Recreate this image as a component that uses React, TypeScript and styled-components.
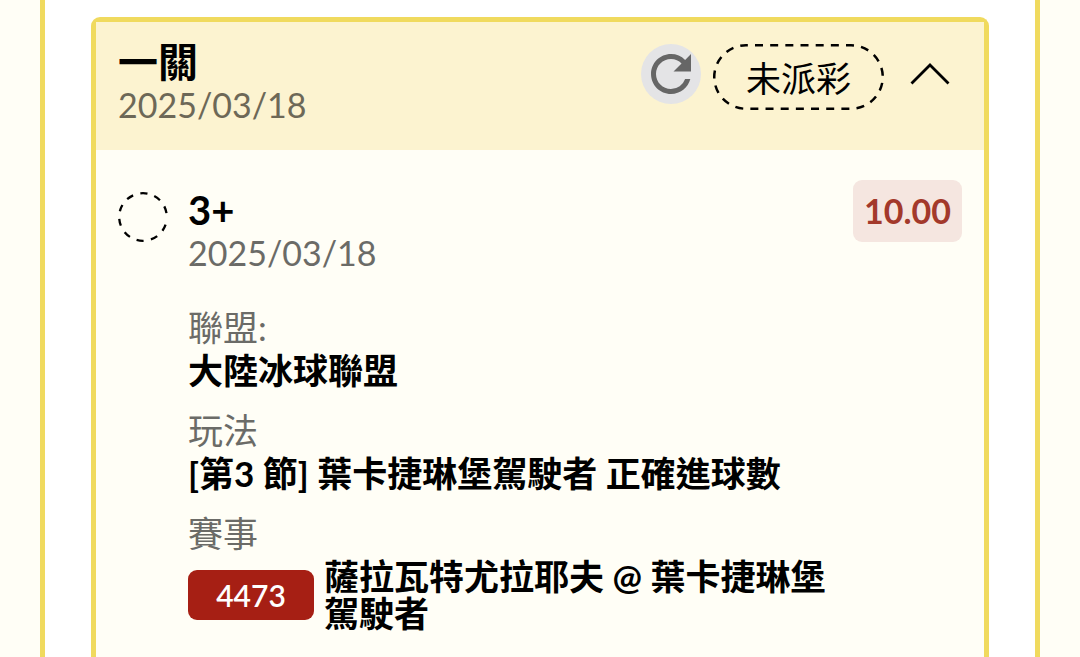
import React, { useState } from "react";
import styled, { createGlobalStyle } from "styled-components";

const GlobalStyle = createGlobalStyle`
  *, *::before, *::after { box-sizing: border-box; }
  body {
    margin: 0;
    background: #fffef6;
    color: #000;
    font-family: Lato, "Noto Sans CJK TC", sans-serif;
    font-size: 35px;
    line-height: 43px;
  }
`;

const Panel = styled.main`
  display: flex;
  flex-direction: column;
  min-height: 100vh;
  margin: 0 40px;
  padding: 17px 46px 0;
  background: #fff;
  border: solid #f0da5e;
  border-width: 0 5px;
`;

const Card = styled.section`
  flex: 1;
  background: #fffef6;
  border: 5px solid #f0da5e;
  border-bottom: 0;
  border-radius: 9px 9px 0 0;
`;

const CardHeader = styled.header`
  display: flex;
  justify-content: space-between;
  align-items: flex-start;
  padding: 19px 22px 25px;
  background: #fcf3d0;
`;

const Title = styled.h1`
  margin: 0;
  font-size: 40px;
  line-height: 43px;
  font-weight: 700;
`;

const DateText = styled.time<{ $tone: string }>`
  display: block;
  color: ${(p) => p.$tone};
  font-size: 34px;
  line-height: 41px;
`;

const Actions = styled.div`
  display: flex;
  align-items: flex-start;
  padding-top: 3px;
`;

const IconButton = styled.button<{ $width: number; $fill?: string }>`
  display: flex;
  align-items: center;
  justify-content: center;
  width: ${(p) => p.$width}px;
  height: 60px;
  padding: 0;
  border: 0;
  border-radius: 30px;
  background: ${(p) => p.$fill ?? "transparent"};
  cursor: pointer;
`;

const Status = styled.span`
  position: relative;
  display: flex;
  align-items: center;
  justify-content: center;
  width: 171px;
  height: 66px;
  margin: 0 14px 0 12px;
  padding-top: 2px;
`;

const StatusOutline = styled.svg`
  position: absolute;
  inset: 0;
`;

const CardBody = styled.div`
  display: grid;
  grid-template-columns: 50px 1fr auto;
  column-gap: 20px;
  align-items: start;
  padding: 30px 22px 24px;
`;

const Marker = styled.svg`
  margin-top: 12px;
`;

const Pick = styled.h2`
  margin: 0;
  padding-top: 9px;
  font-size: 40px;
  line-height: 43px;
  font-weight: 700;
`;

const Details = styled.dl`
  display: flex;
  flex-direction: column;
  gap: 17px;
  margin: 33px 0 0;
`;

const Label = styled.dt`
  color: #6b6b67;
`;

const Value = styled.dd`
  margin: 0;
  font-weight: 700;
`;

const Match = styled(Value)`
  display: flex;
  align-items: center;
  gap: 10px;
  padding-top: 3px;
  line-height: 37px;
`;

const MatchCode = styled.span`
  flex: none;
  width: 126px;
  border-radius: 9px;
  background: #a61f14;
  color: #fff;
  font-size: 30px;
  line-height: 50px;
  font-weight: 600;
  text-align: center;
`;

const Odds = styled.strong`
  padding: 0 11px;
  border-radius: 9px;
  background: #f5e6e0;
  color: #a3392b;
  font-size: 34px;
  line-height: 62px;
  font-weight: 700;
`;

const markerDashes = Array(9).fill("17 18").join(" ") + " 17 28";

export default function App() {
  const [open, setOpen] = useState(true);
  return (
    <>
      <GlobalStyle />
      <Panel>
        <Card>
          <CardHeader>
            <div>
              <Title>一關</Title>
              <DateText $tone="#6d6857" dateTime="2025-03-18">2025/03/18</DateText>
            </div>
            <Actions>
              <IconButton type="button" $width={60} $fill="#e4e4e6" aria-label="重新整理">
                <svg width="60" height="60" viewBox="0 0 24 24" fill="#666">
                  <path d="M17.65 6.35A7.96 7.96 0 0 0 12 4c-4.42 0-7.99 3.58-7.99 8s3.57 8 7.99 8c3.73 0 6.84-2.55 7.73-6h-2.08A5.99 5.99 0 0 1 12 18c-3.31 0-6-2.69-6-6s2.69-6 6-6c1.66 0 3.14.69 4.22 1.78L13 11h7V4l-2.35 2.35z" />
                </svg>
              </IconButton>
              <Status>
                <StatusOutline width="171" height="66" fill="none" stroke="#000" strokeWidth="2.5">
                  <rect x="1.25" y="1.25" width="168.5" height="63.5" rx="31.75" strokeDasharray="8 7.17" strokeDashoffset="-9" />
                </StatusOutline>
                未派彩
              </Status>
              <IconButton
                type="button"
                $width={64}
                aria-label="展開或收合"
                aria-expanded={open}
                onClick={() => setOpen(!open)}
              >
                <svg width="42" height="24" fill="none" stroke="#000" strokeWidth="2.8">
                  <path d={open ? "M2.5 21.5L21 3l18.5 18.5" : "M2.5 2.5L21 21l18.5-18.5"} />
                </svg>
              </IconButton>
            </Actions>
          </CardHeader>
          {open && (
            <CardBody>
              <Marker width="50" height="50" viewBox="0 0 50 50" fill="none" stroke="#000" strokeWidth="2.3" aria-hidden="true">
                <circle cx="25" cy="25" r="23.8" pathLength="360" strokeDasharray={markerDashes} transform="rotate(18.5 25 25)" />
              </Marker>
              <div>
                <Pick>3+</Pick>
                <DateText $tone="#6b6b67" dateTime="2025-03-18">2025/03/18</DateText>
                <Details>
                  <div>
                    <Label>聯盟:</Label>
                    <Value>大陸冰球聯盟</Value>
                  </div>
                  <div>
                    <Label>玩法</Label>
                    <Value>[第3 節] 葉卡捷琳堡駕駛者 正確進球數</Value>
                  </div>
                  <div>
                    <Label>賽事</Label>
                    <Match>
                      <MatchCode>4473</MatchCode>
                      <span>薩拉瓦特尤拉耶夫 @ 葉卡捷琳堡駕駛者</span>
                    </Match>
                  </div>
                </Details>
              </div>
              <Odds>10.00</Odds>
            </CardBody>
          )}
        </Card>
      </Panel>
    </>
  );
}
